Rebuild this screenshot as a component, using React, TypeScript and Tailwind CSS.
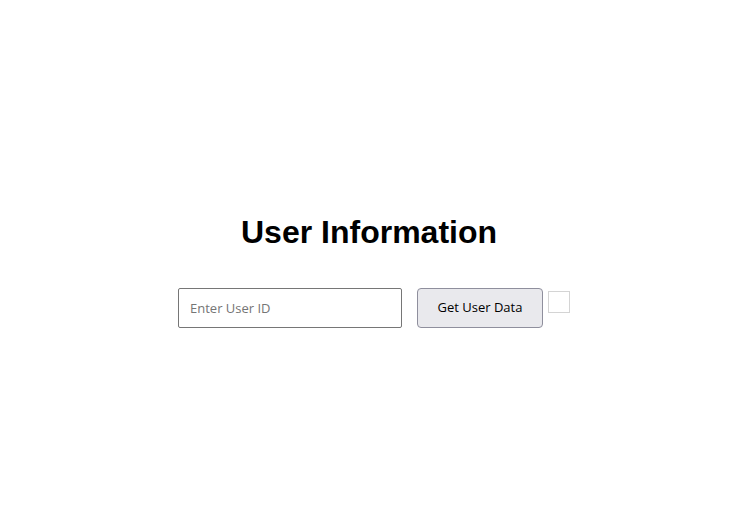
import React, { useState } from "react";

export default function App() {
  const [userId, setUserId] = useState("");

  return (
    <div className="min-h-screen bg-white pt-[214px] font-['Liberation_Sans',Arial,sans-serif] text-black">
      <h1 className="pl-[7px] text-center text-[32px] font-bold leading-[37px]">User Information</h1>

      <div className="mt-[37px] flex items-start justify-center pl-[17px]">
        <input
          type="text"
          value={userId}
          onChange={(e) => setUserId(e.target.value)}
          placeholder="Enter User ID"
          className="h-[40px] w-[224px] rounded-[2px] border border-[#767676] bg-white px-[11px] font-['Open_Sans',sans-serif] text-[13px] text-black placeholder:text-[#757575] outline-none"
        />
        <button
          type="button"
          className="ml-[15px] h-[40px] w-[126px] rounded-[4px] border border-[#8f8f9d] bg-[#e9e9ed] font-['Open_Sans',sans-serif] text-[13px] text-black"
        >
          Get User Data
        </button>
        <div className="ml-[5px] mt-[3px] h-[22px] w-[22px] border border-[#d4d4d4] bg-white" />
      </div>
    </div>
  );
}
